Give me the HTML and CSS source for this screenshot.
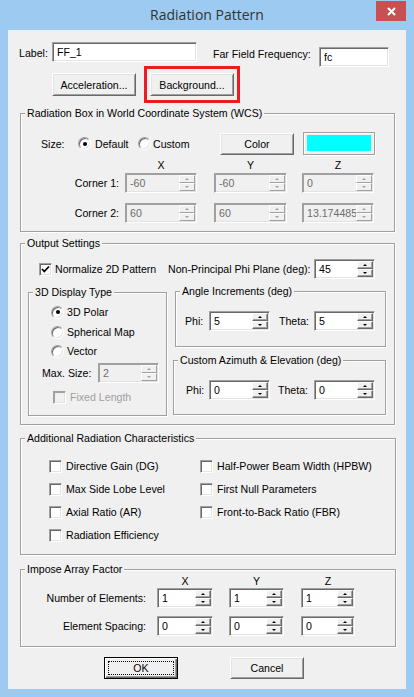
FILE: index.html
```html
<!DOCTYPE html>
<html>
<head>
<meta charset="utf-8">
<title>Radiation Pattern</title>
<link rel="stylesheet" href="styles.css">
</head>
<body>
<div class="window">
  <div class="titlebar">
    <div class="tb-pad"></div>
    <div class="title">Radiation Pattern</div>
    <div class="close"><svg width="30" height="20" viewBox="0 0 30 20"><path d="M12 7 L19 14 M19 7 L12 14" stroke="#fff" stroke-width="2" fill="none"/></svg></div>
  </div>
  <div class="client">
    <div class="row r1">
      <span class="lbl w-label">Label:</span>
      <div class="edit w145">FF_1</div>
      <span class="lbl w-ff">Far Field Frequency:</span>
      <div class="edit w70 fc">fc</div>
    </div>
    <div class="row r2">
      <div class="btn w84">Acceleration...</div>
      <div class="hl"><div class="btn w84">Background...</div></div>
    </div>

    <div class="group g1">
      <div class="gtitle">Radiation Box in World Coordinate System (WCS)</div>
      <div class="row size-row">
        <span class="lbl w-size">Size:</span>
        <span class="opt opt-default"><i class="radio on"></i><span class="otext">Default</span></span>
        <span class="opt opt-custom"><i class="radio"></i><span class="otext">Custom</span></span>
        <div class="btn w74 h22">Color</div>
        <div class="swatch"><div class="swatch-fill"></div></div>
      </div>
      <div class="row xyz-head">
        <span class="corner-lbl"></span>
        <span class="hcell w72">X</span>
        <span class="hcell w73 gap17">Y</span>
        <span class="hcell w72 gap15">Z</span>
      </div>
      <div class="row corner-row first">
        <span class="lbl corner-lbl">Corner 1:</span>
        <div class="spin dis w72"><span class="v">-60</span><span class="sb"><i class="up"></i><i class="dn"></i></span></div>
        <div class="spin dis w73 gap17"><span class="v">-60</span><span class="sb"><i class="up"></i><i class="dn"></i></span></div>
        <div class="spin dis w72 gap15"><span class="v">0</span><span class="sb"><i class="up"></i><i class="dn"></i></span></div>
      </div>
      <div class="row corner-row second">
        <span class="lbl corner-lbl">Corner 2:</span>
        <div class="spin dis w72"><span class="v">60</span><span class="sb"><i class="up"></i><i class="dn"></i></span></div>
        <div class="spin dis w73 gap17"><span class="v">60</span><span class="sb"><i class="up"></i><i class="dn"></i></span></div>
        <div class="spin dis w72 gap15"><span class="v">13.1744859</span><span class="sb"><i class="up"></i><i class="dn"></i></span></div>
      </div>
    </div>

    <div class="group g2">
      <div class="gtitle">Output Settings</div>
      <div class="row norm-row">
        <span class="opt"><i class="chk on"><svg width="11" height="11" viewBox="0 0 11 11"><path d="M2 5 L4.3 7.5 L9 2.5" stroke="#000" stroke-width="1.8" fill="none"/></svg></i><span class="otext w-norm">Normalize 2D Pattern</span></span>
        <span class="lbl w-npp">Non-Principal Phi Plane (deg):</span>
        <div class="spin w61"><span class="v">45</span><span class="sb"><i class="up"></i><i class="dn"></i></span></div>
      </div>
      <div class="cols">
        <div class="group sub3d">
          <div class="gtitle">3D Display Type</div>
          <div class="radrow rr1"><i class="radio on"></i><span class="otext">3D Polar</span></div>
          <div class="radrow rr2"><i class="radio"></i><span class="otext">Spherical Map</span></div>
          <div class="radrow rr3"><i class="radio"></i><span class="otext">Vector</span></div>
          <div class="row max-row">
            <span class="lbl w-max">Max. Size:</span>
            <div class="spin dis w61"><span class="v">2</span><span class="sb"><i class="up"></i><i class="dn"></i></span></div>
          </div>
          <div class="row fixed-row">
            <i class="chk dis"></i><span class="otext distext">Fixed Length</span>
          </div>
        </div>
        <div class="rcol">
          <div class="group angle">
            <div class="gtitle">Angle Increments (deg)</div>
            <div class="row ang-row">
              <span class="lbl w24">Phi:</span>
              <div class="spin w61"><span class="v">5</span><span class="sb"><i class="up"></i><i class="dn"></i></span></div>
              <span class="lbl w35 ml9">Theta:</span>
              <div class="spin w61"><span class="v">5</span><span class="sb"><i class="up"></i><i class="dn"></i></span></div>
            </div>
          </div>
          <div class="group azel">
            <div class="gtitle">Custom Azimuth &amp; Elevation (deg)</div>
            <div class="row az-row">
              <span class="lbl w23">Phi:</span>
              <div class="spin w61"><span class="v">0</span><span class="sb"><i class="up"></i><i class="dn"></i></span></div>
              <span class="lbl w36 ml8">Theta:</span>
              <div class="spin w61"><span class="v">0</span><span class="sb"><i class="up"></i><i class="dn"></i></span></div>
            </div>
          </div>
        </div>
      </div>
    </div>

    <div class="group g3">
      <div class="gtitle">Additional Radiation Characteristics</div>
      <div class="chkgrid">
        <span class="opt"><i class="chk"></i><span class="otext">Directive Gain (DG)</span></span>
        <span class="opt"><i class="chk"></i><span class="otext">Half-Power Beam Width (HPBW)</span></span>
        <span class="opt"><i class="chk"></i><span class="otext">Max Side Lobe Level</span></span>
        <span class="opt"><i class="chk"></i><span class="otext">First Null Parameters</span></span>
        <span class="opt"><i class="chk"></i><span class="otext">Axial Ratio (AR)</span></span>
        <span class="opt"><i class="chk"></i><span class="otext">Front-to-Back Ratio (FBR)</span></span>
        <span class="opt"><i class="chk"></i><span class="otext">Radiation Efficiency</span></span>
      </div>
    </div>

    <div class="group g4">
      <div class="gtitle">Impose Array Factor</div>
      <div class="row arr-head">
        <span class="arr-lbl"></span>
        <span class="hcell w56">X</span>
        <span class="hcell w55 gap16">Y</span>
        <span class="hcell w54 gap17">Z</span>
      </div>
      <div class="row arr-row first">
        <span class="lbl arr-lbl">Number of Elements:</span>
        <div class="spin w56"><span class="v">1</span><span class="sb"><i class="up"></i><i class="dn"></i></span></div>
        <div class="spin w55 gap16"><span class="v">1</span><span class="sb"><i class="up"></i><i class="dn"></i></span></div>
        <div class="spin w54 gap17"><span class="v">1</span><span class="sb"><i class="up"></i><i class="dn"></i></span></div>
      </div>
      <div class="row arr-row second">
        <span class="lbl arr-lbl">Element Spacing:</span>
        <div class="spin w56"><span class="v">0</span><span class="sb"><i class="up"></i><i class="dn"></i></span></div>
        <div class="spin w55 gap16"><span class="v">0</span><span class="sb"><i class="up"></i><i class="dn"></i></span></div>
        <div class="spin w54 gap17"><span class="v">0</span><span class="sb"><i class="up"></i><i class="dn"></i></span></div>
      </div>
    </div>

    <div class="row btn-row">
      <div class="btn default w74 h22"><span class="focus">OK</span></div>
      <div class="btn w74 h22 cancel">Cancel</div>
    </div>
  </div>
</div>
</body>
</html>
```

FILE: styles.css
```css
* { box-sizing: border-box; }

html, body { margin: 0; padding: 0; }

body {
  width: 414px;
  height: 697px;
  overflow: hidden;
  background: #9ccaf0;
  font-family: "Liberation Sans", Arial, sans-serif;
  font-size: 10.6px;
  color: #000;
}

i { font-style: normal; }

.window {
  width: 414px;
  height: 697px;
  background: #9ccaf0;
}

/* ---------- title bar ---------- */
.titlebar {
  height: 30px;
  display: grid;
  grid-template-columns: 38px 1fr 30px;
  padding-right: 8px;
  align-items: start;
}
.title {
  text-align: center;
  font-family: "Open Sans", "Noto Sans", sans-serif;
  font-size: 14px;
  line-height: 30px;
  color: #333;
}
.close {
  margin-top: 1px;
  width: 30px;
  height: 20px;
  background: #c75050;
}
.close svg { display: block; }

/* ---------- client ---------- */
.client {
  margin: 0 8px;
  height: 659px;
  background: #f0f0f0;
  padding-top: 12px;
}

.row { display: flex; align-items: center; }

.lbl { line-height: 20px; white-space: nowrap; }

/* row 1 */
.r1 { height: 25px; padding-left: 11px; align-items: flex-start; }
.w-label { width: 33px; margin-top: 1px; }
.w-ff { width: 106px; margin-left: 16px; margin-top: 2px; }
.fc { margin-top: 5px; }

/* edits */
.edit {
  height: 20px;
  background: #fff;
  border: 1px solid;
  border-color: #a0a0a0 #fff #fff #a0a0a0;
  box-shadow: inset 1px 1px 0 #696969, inset -1px -1px 0 #e3e3e3;
  padding-left: 4px;
  line-height: 18px;
  white-space: nowrap;
}
.w145 { width: 145px; }
.w70 { width: 70px; }

/* buttons */
.btn {
  height: 23px;
  display: flex;
  align-items: center;
  justify-content: center;
  background: #f0f0f0;
  border: 1px solid;
  border-color: #fff #696969 #696969 #fff;
  box-shadow: inset 1px 1px 0 #e3e3e3, inset -1px -1px 0 #a0a0a0;
  white-space: nowrap;
}
.w84 { width: 84px; }
.w74 { width: 74px; }
.h22 { height: 22px; }

.r2 { margin-top: 6px; height: 23px; padding-left: 44px; align-items: flex-start; }
.hl {
  margin: -7px -6px -7px 8px;
  padding: 4px 3px;
  border: 3px solid #ec1c24;
}

/* group boxes */
.group {
  border: 1px solid #a0a0a0;
  box-shadow: inset 1px 1px 0 #fff, 1px 1px 0 #fff;
}
.gtitle {
  width: max-content;
  margin: -8px 0 0 4px;
  padding: 0 2px;
  line-height: 14px;
  background: #f0f0f0;
  white-space: nowrap;
}

.g1 { margin: 17px 0 0 12px; width: 375px; height: 119px; }
.g2 { margin: 11px 0 0 12px; width: 375px; height: 182px; }
.g3 { margin: 13px 0 0 12px; width: 376px; height: 117px; }
.g4 { margin: 14px 0 0 12px; width: 376px; height: 78px; }

/* radios / checks */
.opt { display: flex; align-items: center; white-space: nowrap; }
.otext { line-height: 14px; white-space: nowrap; }

.radio {
  flex: none;
  width: 13px;
  height: 13px;
  border-radius: 50%;
  background: #fff;
  border: 1px solid;
  border-color: #a0a0a0 #fff #fff #a0a0a0;
  box-shadow: inset 1px 1px 0 #696969, inset -1px -1px 0 #e3e3e3;
  display: flex;
  align-items: center;
  justify-content: center;
}
.radio.on::after {
  content: "";
  width: 4px;
  height: 4px;
  border-radius: 50%;
  background: #000;
}

.chk {
  flex: none;
  width: 13px;
  height: 13px;
  background: #fff;
  border: 1px solid;
  border-color: #a0a0a0 #fff #fff #a0a0a0;
  box-shadow: inset 1px 1px 0 #696969, inset -1px -1px 0 #e3e3e3;
  display: flex;
  align-items: center;
  justify-content: center;
}
.chk svg { display: block; }
.chk.dis { background: #f0f0f0; box-shadow: inset 1px 1px 0 #a0a0a0, inset -1px -1px 0 #e3e3e3; }
.distext { color: #a0a0a0; }

/* size row */
.size-row { margin-top: 12px; height: 23px; padding-left: 20px; }
.w-size { width: 37px; }
.opt-default { width: 60px; }
.opt-default .otext { margin-left: 4px; }
.opt-custom { width: 82px; }
.opt-custom .otext { margin-left: 2px; }
.swatch {
  margin-left: 9px;
  width: 72px;
  height: 23px;
  border: 1px solid #a0a0a0;
  box-shadow: inset 1px 1px 0 #fff, 1px 1px 0 #fff;
  padding: 2px 3px 3px 3px;
}
.swatch-fill { width: 100%; height: 100%; background: #00ffff; }

/* xyz header + corner rows */
.xyz-head { margin-top: 3px; height: 14px; }
.hcell { text-align: center; line-height: 14px; }
.corner-lbl { width: 104px; text-align: right; padding-right: 6px; }
.w72 { width: 72px; }
.w73 { width: 73px; }
.w61 { width: 61px; }
.w56 { width: 56px; }
.w55 { width: 55px; }
.w54 { width: 54px; }
.gap17 { margin-left: 17px; }
.gap15 { margin-left: 15px; }
.gap16 { margin-left: 16px; }
.corner-row { height: 20px; }
.corner-row.first { margin-top: 1px; }
.corner-row.second { margin-top: 10px; }

/* spinners */
.spin {
  flex: none;
  display: flex;
  height: 20px;
  background: #fff;
  border: 1px solid;
  border-color: #a0a0a0 #fff #fff #a0a0a0;
  box-shadow: inset 1px 1px 0 #696969, inset -1px -1px 0 #e3e3e3;
  padding: 1px;
}
.spin .v {
  flex: 1;
  min-width: 0;
  overflow: hidden;
  white-space: nowrap;
  padding-left: 3px;
  line-height: 16px;
}
.spin .sb {
  flex: none;
  width: 16px;
  display: flex;
  flex-direction: column;
}
.spin .sb i {
  height: 8px;
  display: flex;
  align-items: center;
  justify-content: center;
  background: #f0f0f0;
  border: 1px solid;
  border-color: #fff #696969 #696969 #fff;
  box-shadow: inset -1px -1px 0 #a0a0a0;
}
.spin .up::after {
  content: "";
  border-left: 2px solid transparent;
  border-right: 2px solid transparent;
  border-bottom: 2px solid #000;
}
.spin .dn::after {
  content: "";
  border-left: 2px solid transparent;
  border-right: 2px solid transparent;
  border-top: 2px solid #000;
}
.spin.dis { background: #f0f0f0; color: #6d6d6d; box-shadow: inset 1px 1px 0 #a0a0a0, inset -1px -1px 0 #e3e3e3; }
.spin.dis .sb i { border-color: #fff #a0a0a0 #a0a0a0 #fff; box-shadow: none; }
.spin.dis .up::after { border-bottom-color: #a0a0a0; }
.spin.dis .dn::after { border-top-color: #a0a0a0; }

/* output settings */
.norm-row { margin-top: 9px; height: 20px; padding-left: 18px; }
.w-norm { width: 113px; margin-left: 3px; }
.w-npp { width: 146px; }

.cols { display: flex; align-items: flex-start; margin-top: 12px; padding-left: 7px; }
.sub3d { margin-top: 1px; width: 139px; height: 124px; }
.rcol { margin-left: 8px; display: flex; flex-direction: column; }
.angle { width: 211px; height: 56px; }
.azel { margin-top: 13px; margin-left: -2px; width: 213px; height: 55px; }

.radrow { display: flex; align-items: center; height: 16px; padding-left: 22px; }
.radrow .otext { margin-left: 3px; }
.rr1 { margin-top: 5px; }
.rr2 { margin-top: 4px; }
.rr3 { margin-top: 3px; }
.max-row { margin-top: 4px; height: 20px; padding-left: 13px; }
.w-max { width: 56px; }
.fixed-row { margin-top: 7px; height: 14px; padding-left: 24px; }
.fixed-row .otext { margin-left: 4px; }

.ang-row { margin-top: 13px; height: 20px; padding-left: 9px; }
.az-row { margin-top: 13px; height: 20px; padding-left: 12px; }
.w24 { width: 24px; }
.w23 { width: 23px; }
.w35 { width: 35px; }
.w36 { width: 36px; }
.ml9 { margin-left: 9px; }
.ml8 { margin-left: 8px; }

/* additional characteristics */
.chkgrid {
  display: grid;
  grid-template-columns: 151px auto;
  grid-auto-rows: 14px;
  row-gap: 9px;
  margin-top: 14px;
  padding-left: 28px;
}
.chkgrid .otext { margin-left: 4px; }

/* array factor */
.arr-head { height: 10px; }
.arr-head .hcell { line-height: 10px; }
.arr-lbl { width: 136px; text-align: right; padding-right: 11px; }
.arr-row { height: 20px; }
.arr-row.first { margin-top: 2px; }
.arr-row.second { margin-top: 8px; }

/* bottom buttons */
.btn-row { margin-top: 10px; padding-left: 96px; align-items: flex-start; }
.btn.default {
  border: 1px solid #000;
  box-shadow: inset 1px 1px 0 #fff, inset -1px -1px 0 #696969, inset -2px -2px 0 #a0a0a0;
  padding: 3px;
}
.focus {
  flex: 1;
  align-self: stretch;
  display: flex;
  align-items: center;
  justify-content: center;
  border: 1px dotted #000;
}
.cancel { margin-left: 52px; }
```
